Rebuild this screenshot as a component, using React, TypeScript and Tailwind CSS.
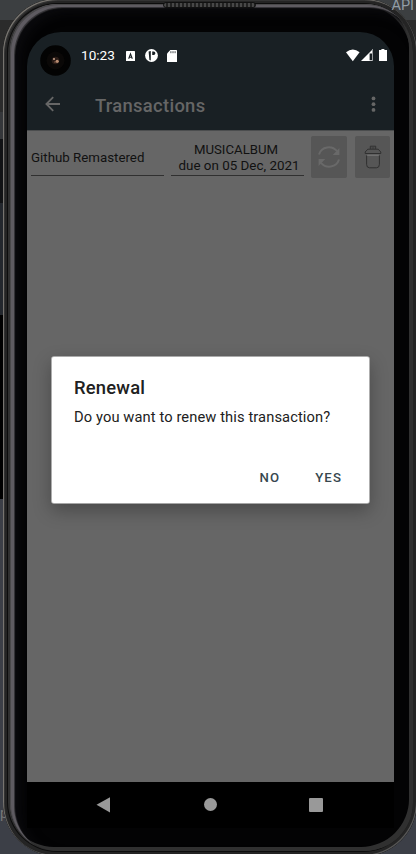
import type { ReactNode } from "react";

function StatusBar() {
  return (
    <div className="flex h-[46px] items-center pl-[13px] pr-[6px] text-white">
      <svg className="mt-[10px] shrink-0" width="31" height="31" viewBox="0 0 31 31">
        <circle cx="15.5" cy="15.5" r="15.3" fill="#030303" />
        <circle cx="15.5" cy="15.5" r="9" fill="#0a0807" />
        <circle cx="15.5" cy="15.5" r="3.8" fill="#2a1c17" />
        <circle cx="14" cy="14" r="1" fill="#c9a58e" />
        <circle cx="17.2" cy="16.3" r="1.6" fill="#b98d72" />
        <circle cx="15" cy="17" r="0.8" fill="#8c6250" />
      </svg>
      <span className="ml-[10px] mt-[2px] w-[34px] whitespace-nowrap text-[13.6px] leading-none">10:23</span>
      <svg className="ml-[11px] mt-px" width="9" height="10" viewBox="0 0 9 10">
        <rect width="9" height="10" rx="0.6" fill="#fff" />
        <path d="M2.7 7.8 4.5 2.8 6.3 7.8M3.3 6.3h2.4" fill="none" stroke="#192024" strokeWidth="1.1" />
      </svg>
      <svg className="ml-[10px]" width="13" height="13" viewBox="0 0 13 13">
        <circle cx="6.5" cy="6.5" r="6.4" fill="#fff" />
        <path d="M3.6 2.6 5.8 2V11.6L4.4 11zM7.2 2.6h1.5a1.7 1.7 0 0 1 0 3.4H7.2z" fill="#192024" />
      </svg>
      <svg className="ml-[9px] mt-px" width="10" height="12" viewBox="0 0 10 12">
        <path d="M3.3 0H9.4q.6 0 .6.6v10.8q0 .6-.6.6H.6q-.6 0-.6-.6V3.4z" fill="#fff" />
        <path d="M3.9 1.2v2M6 1.2v2M8.1 1.2v2" stroke="#192024" strokeWidth=".8" />
      </svg>
      <svg className="ml-auto" width="42" height="13" viewBox="0 0 42 13">
        <path d="M0 3.3Q6.8-2.4 13.6 3.3L6.8 12.2z" fill="#fff" />
        <path d="M15 12 27 0V12z" fill="#fff" />
        <path d="M23.6 4.6h2.4v6.6h-2.4z" fill="#192024" />
        <path d="M26 1v11h1V0z" fill="#9a9da0" />
        <path d="M35.4 0h3v1H41v11h-8V1h2.4z" fill="#fff" />
      </svg>
    </div>
  );
}

function AppBar() {
  return (
    <div className="flex h-[52px] items-center pl-[18px] pr-[18px] text-[#666666]">
      <svg width="16" height="16" viewBox="0 0 16 16" fill="none" stroke="currentColor" strokeWidth="1.8">
        <path d="M15 8H1.5M8.2 1.2 1.4 8l6.8 6.8" />
      </svg>
      <h1 className="ml-[34px] mt-[4px] text-[18.4px] leading-none font-medium tracking-[0.3px]">Transactions</h1>
      <svg className="ml-auto" width="5" height="16" viewBox="0 0 5 16" fill="currentColor">
        <circle cx="2.5" cy="2.4" r="1.9" />
        <circle cx="2.5" cy="8.2" r="1.9" />
        <circle cx="2.5" cy="13.9" r="1.9" />
      </svg>
    </div>
  );
}

function ActionButton({ label, className, children }: { label: string; className: string; children: ReactNode }) {
  return (
    <button aria-label={label} className={`flex h-[42px] items-center justify-center rounded-[2px] bg-[#565656] ${className}`}>
      {children}
    </button>
  );
}

function TransactionRow() {
  return (
    <div className="flex pt-[5px] pl-[4px] text-[13.2px] leading-[16px] text-[#111111]">
      <div className="flex h-[40px] w-[133px] items-center border-b border-[#303030]">
        <span className="mt-[5px] whitespace-nowrap text-[13.3px]">Github Remastered</span>
      </div>
      <div className="ml-[7px] h-[40px] w-[133px] border-b border-[#303030] pt-[6px] text-center whitespace-nowrap">
        <div className="pr-[3px]">MUSICALBUM</div>
        <div className="pl-[3px] text-[13.4px]">due on 05 Dec, 2021</div>
      </div>
      <ActionButton label="Renew" className="ml-[7px] w-[36px]">
        <svg width="24" height="24" viewBox="0 0 24 24" fill="none" stroke="#696969" strokeWidth="2">
          <path d="M2 9.5C4.5 1.2 15 .2 20 6.2M22 14.5C19.5 22.8 9 23.8 4 17.8" />
          <path d="M22.4 3v7h-6.6zM1.6 21v-7h6.6z" fill="#696969" stroke="none" />
        </svg>
      </ActionButton>
      <ActionButton label="Delete" className="ml-[8px] w-[35px]">
        <svg width="18" height="24" viewBox="0 0 18 24" fill="none" stroke="#303030" strokeWidth="1">
          <path d="M6.3 4V1.2h5.4V4M7.5 3h3M1.2 8.5V7l2.6-2.8h10.4L16.8 7v1.5H1.2M2.6 10.5v9q0 3.3 3 3.3h6.8q3 0 3-3.3v-9" />
          <path d="M3.2 10.2h11.6" stroke="#858585" strokeWidth=".8" />
        </svg>
      </ActionButton>
    </div>
  );
}

function RenewalDialog() {
  return (
    <div role="dialog" className="absolute left-[25px] top-[325px] flex h-[146px] w-[317px] flex-col rounded-[2px] bg-white px-[22px] text-[#212121] shadow-[0_0_0_0.8px_#c4c4c4,0_7px_18px_1px_rgba(0,0,0,0.28)]">
      <h2 className="mt-[20px] text-[18.4px] leading-[22px] font-medium tracking-[0.2px]">Renewal</h2>
      <p className="mt-[8px] whitespace-nowrap text-[14.7px] leading-[20px] tracking-[0.1px]">Do you want to renew this transaction?</p>
      <div className="mt-[43px] flex justify-end gap-[35px] pr-[5px] text-[13.2px] leading-[16px] font-medium tracking-[1.1px] text-[#37474f]">
        <button>NO</button>
        <button>YES</button>
      </div>
    </div>
  );
}

function NavigationBar() {
  return (
    <div className="flex h-[46px] items-center bg-black pl-[69px] text-[#999999]">
      <svg width="14" height="16" viewBox="0 0 14 16" fill="currentColor"><path d="M14 .2v15.2L.5 7.8z" /></svg>
      <div className="mt-[-1px] ml-[94px] size-[13px] rounded-full bg-[#999999]" />
      <div className="ml-[92px] size-[14px] rounded-[1px] bg-[#999999]" />
    </div>
  );
}

export default function App() {
  return (
    <div className="relative h-[854px] w-[416px] overflow-hidden bg-[#2b2b2b] font-[Roboto,sans-serif]">
      {/* Editor window visible behind the emulator */}
      <div className="absolute inset-0 flex flex-col text-[#777777]">
        <div className="h-[20px] bg-[#3c3f41]" />
        <div className="h-[92px] bg-[#2b2b2b]" />
        <div className="h-[27px] bg-[#35373a]" />
        <div className="h-[64px] bg-[#111214]" />
        <div className="h-[112px] bg-[#23272d]" />
        <div className="h-[184px] bg-black" />
        <div className="grow bg-[#3c3f47] pt-[305px] text-[14px] leading-[18px]">p</div>
      </div>
      {/* Phone shell */}
      <div className="absolute left-[3px] top-[-1px] h-[857px] w-[414px] overflow-hidden rounded-[54px] bg-[#030304] shadow-[inset_1px_1px_0_#77746f,inset_2px_2px_0_#333,inset_-1px_-1px_0_#555,inset_0_0_0_4px_#242424,inset_0_0_0_5px_#0c0c0c,inset_0_0_0_7px_#303030]">
        <div className="absolute inset-y-[5px] left-[7px] right-[4px] rounded-[48px] shadow-[inset_1px_1px_0_#4a494b,inset_4px_3px_0_#5e5b61,inset_5px_4px_1px_#3a393c,inset_-4px_-4px_0_#303030,inset_10px_8px_12px_#0b0b0e]" />
        <div className="absolute left-[160px] top-[3px] h-[6px] w-[93px] rounded-[3px] border border-[#111111] bg-[repeating-linear-gradient(90deg,#484848_0px,#484848_2px,#222_2px,#222_4px)]" />
        <div className="absolute left-[24px] top-[33px] w-[367px] overflow-hidden rounded-tl-[34px] rounded-tr-[34px]">
          <div className="bg-[#192024]">
            <StatusBar />
            <AppBar />
          </div>
          <main className="h-[652px] border-t border-[#4b4d4e] bg-[#666666]">
            <TransactionRow />
          </main>
          <NavigationBar />
          <RenewalDialog />
        </div>
      </div>
      <span className="absolute top-0 right-[2px] text-[14.5px] leading-[11px] text-[#929da6]">API</span>
    </div>
  );
}
